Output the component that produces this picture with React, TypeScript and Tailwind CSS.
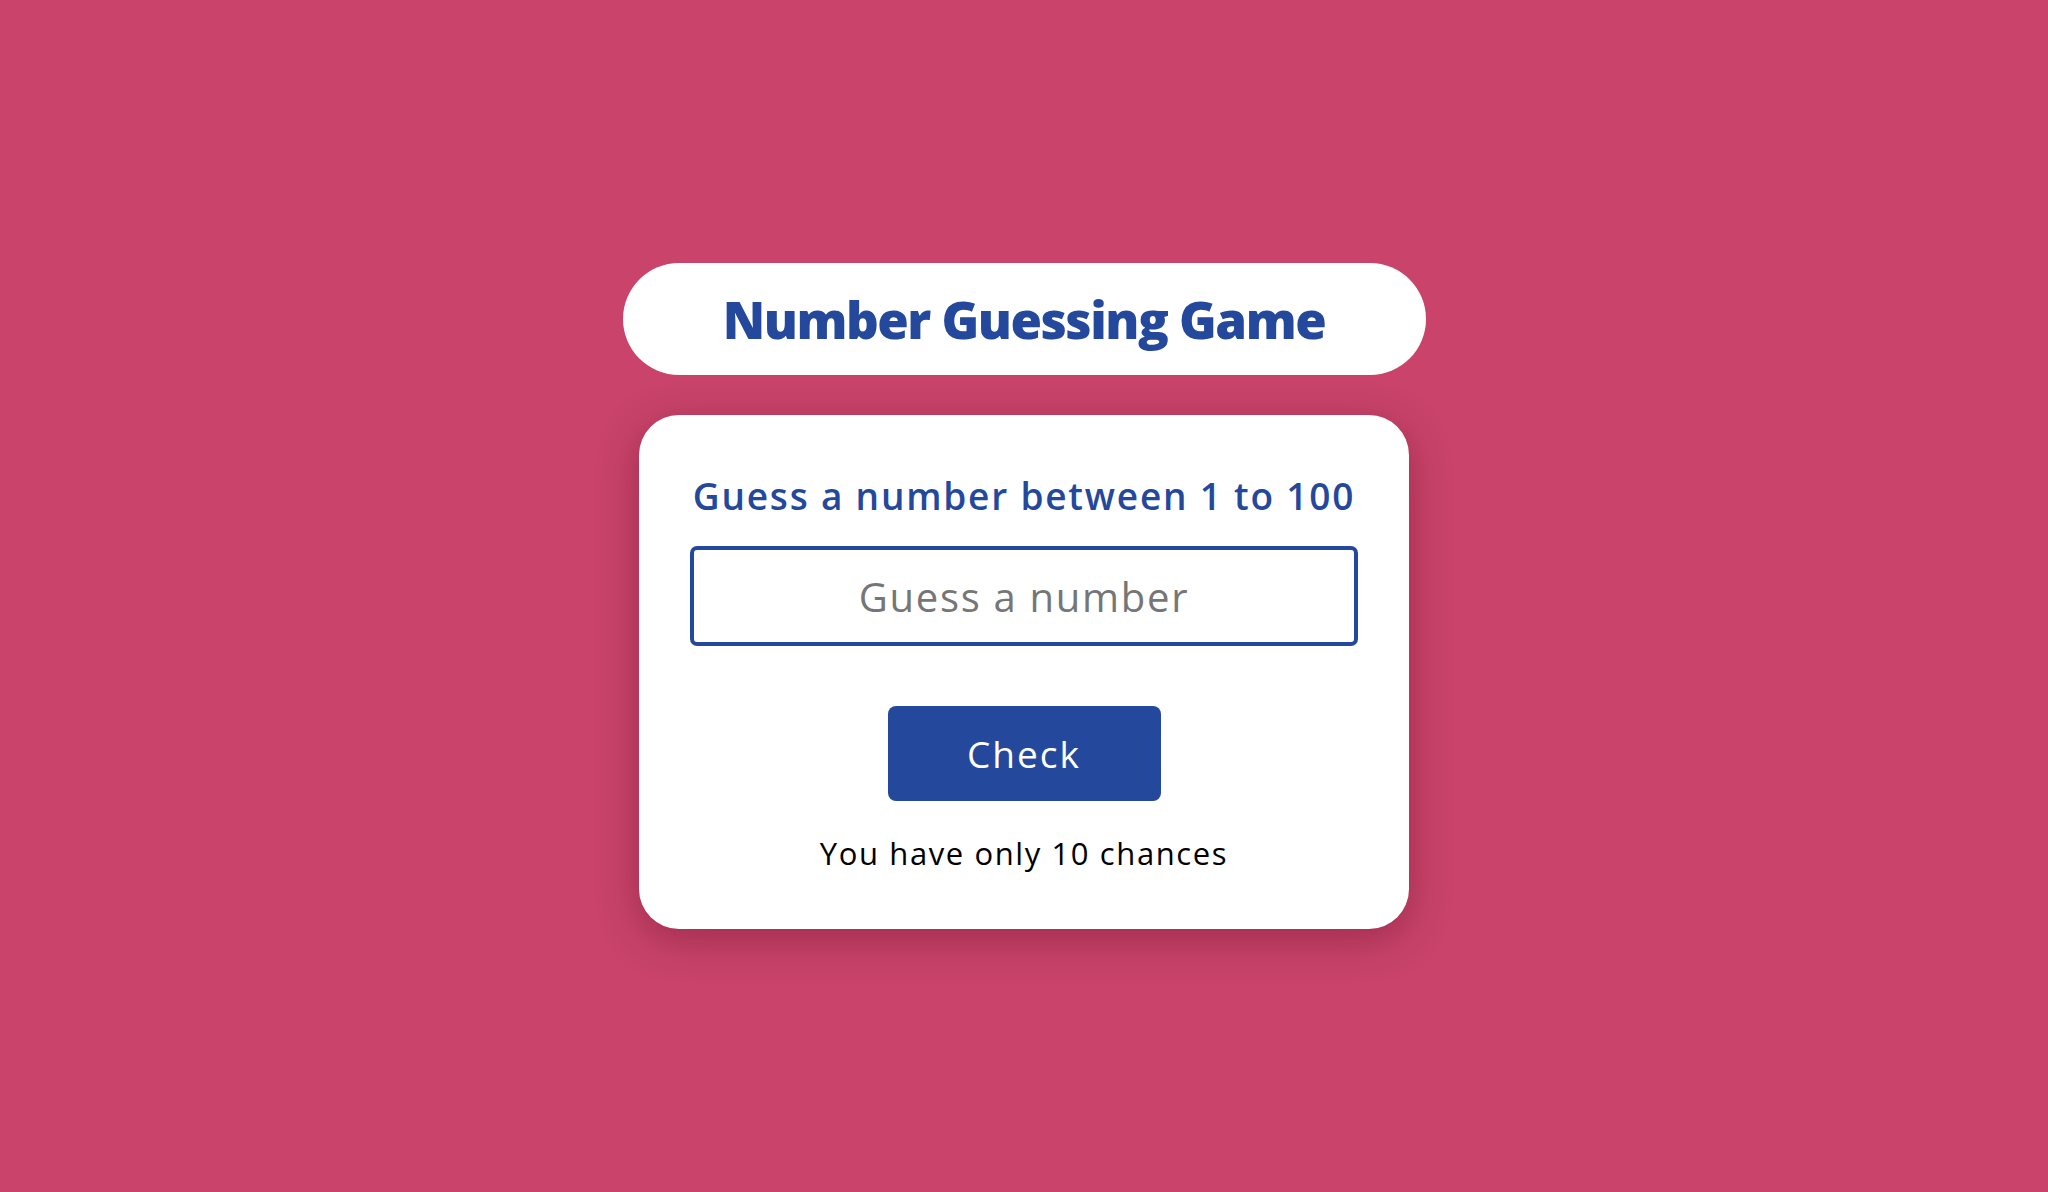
import React from "react";

export default function App() {
  return (
    <div
      className="min-h-screen w-full bg-[#c9436a] flex flex-col items-center justify-center gap-[40px]"
      style={{ fontFamily: '"Open Sans", "Liberation Sans", sans-serif' }}
    >
      <div className="w-[803px] h-[112px] rounded-full bg-white flex items-center justify-center">
        <h1 className="text-[51px] leading-none font-extrabold text-[#24489c] tracking-[-1.5px]">
          Number Guessing Game
        </h1>
      </div>

      <div className="w-[770px] rounded-[40px] bg-white shadow-[0_10px_40px_rgba(80,0,30,0.35)] px-[51px] pt-[62px] pb-[60px] flex flex-col items-center">
        <p className="whitespace-nowrap text-[37px] leading-[37px] font-semibold text-[#24489c] tracking-[1.8px]">
          Guess a number between 1 to 100
        </p>
        <input
          type="text"
          inputMode="numeric"
          placeholder="Guess a number"
          className="mt-[32px] w-full h-[100px] border-[4px] border-[#24489c] rounded-[7px] text-center text-[40px] tracking-[1.7px] text-[#333] placeholder:text-[#767676] outline-none"
        />
        <button className="mt-[60px] w-[273px] h-[95px] rounded-[8px] bg-[#24489c] text-white text-[37px] leading-none tracking-[2px]">
          Check
        </button>
        <p className="mt-[37px] whitespace-nowrap text-[31px] leading-[31px] text-black tracking-[1.6px]">
          You have only 10 chances
        </p>
      </div>
    </div>
  );
}
